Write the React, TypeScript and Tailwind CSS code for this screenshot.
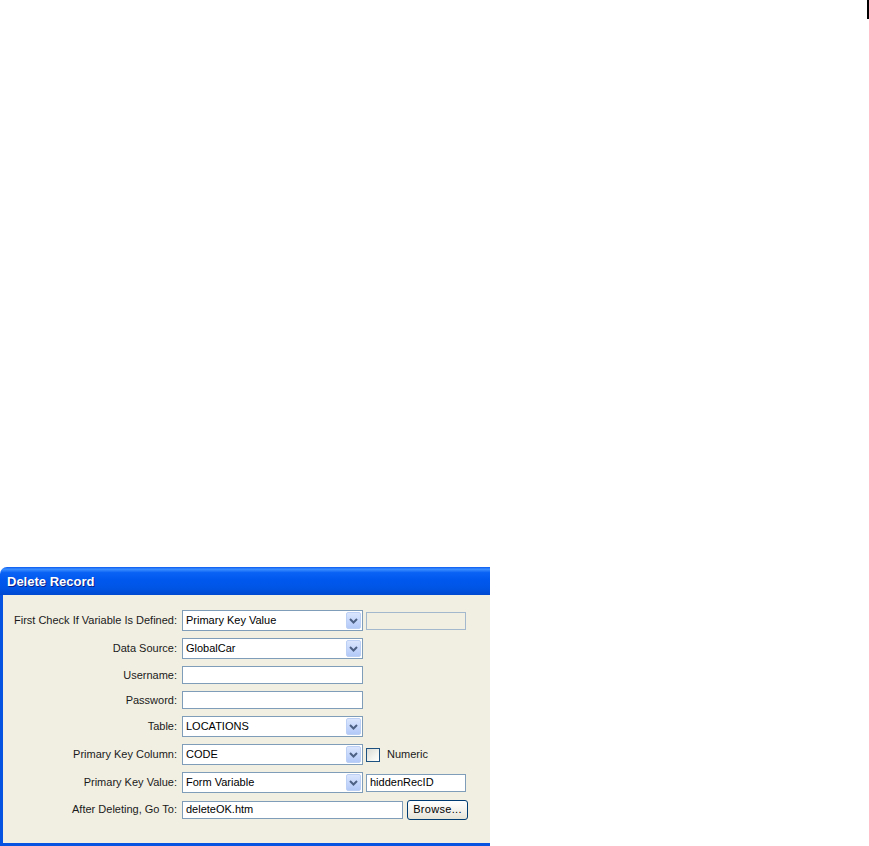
import type { ReactNode } from "react";

const font = "font-['Liberation_Sans',Arial,sans-serif]";

function Chevron() {
  return (
    <svg width="9" height="6" viewBox="0 0 9 6" className="block">
      <path d="M1 1 L4.5 4.5 L8 1" fill="none" stroke="#4d6185" strokeWidth="2" />
    </svg>
  );
}

function Select({ value, width = "w-[181px]" }: { value: string; width?: string }) {
  return (
    <div className={`${width} h-[21px] flex items-center bg-white border border-[#7f9db9] pl-[3px] pr-px`}>
      <span className="flex-1 truncate text-[11px] text-black">{value}</span>
      <span className="w-[15px] h-[17px] flex items-center justify-center rounded-[2px] border border-[#bcd0f5] bg-[linear-gradient(180deg,#dbe6fd_0%,#c4d6fb_55%,#b3c9f7_100%)]">
        <Chevron />
      </span>
    </div>
  );
}

function TextField({ value = "", width = "w-[181px]", disabled = false }: { value?: string; width?: string; disabled?: boolean }) {
  return (
    <div
      className={`${width} h-[18px] flex items-center border pl-[3px] text-[11px] text-black ${
        disabled ? "bg-[#f1efe2] border-[#a3b7cd]" : "bg-white border-[#7f9db9]"
      }`}
    >
      {value}
    </div>
  );
}

function Row({ label, h, children }: { label: string; h: string; children: ReactNode }) {
  return (
    <div className={`flex items-center ${h}`}>
      <div className="w-[179px] shrink-0 text-right pr-[5px] text-[11px] text-[#1a1a1a]">{label}</div>
      <div className="flex items-center gap-[3px]">{children}</div>
    </div>
  );
}

export default function App() {
  return (
    <div className={`h-[846px] w-[869px] bg-white flex flex-col ${font}`}>
      <div className="flex justify-end">
        <div className="w-[2px] h-[19px] bg-black" />
      </div>

      <div className="mt-auto w-[490px] h-[279px] flex flex-col">
        {/* title bar */}
        <div className="h-[28px] shrink-0 rounded-tl-[7px] flex items-center pl-[7px] bg-[linear-gradient(180deg,#0a5cf0_0%,#3d8fff_8%,#0a62f5_20%,#0058ee_45%,#0055e5_75%,#0049d0_100%)]">
          <span className="text-[13px] font-bold text-white [text-shadow:1px_1px_0_#0a1f8a] pt-px">
            Delete Record
          </span>
        </div>

        {/* body */}
        <div className="flex-1 flex border-l-[3px] border-b-[3px] border-[#0553e0] bg-[#f1efe2]">
          <div className="flex flex-col gap-[7px] pt-[15px]">
            <Row label="First Check If Variable Is Defined:" h="h-[21px]">
              <Select value="Primary Key Value" />
              <TextField disabled width="w-[100px]" />
            </Row>
            <Row label="Data Source:" h="h-[21px]">
              <Select value="GlobalCar" />
            </Row>
            <Row label="Username:" h="h-[18px]">
              <TextField />
            </Row>
            <Row label="Password:" h="h-[18px]">
              <TextField />
            </Row>
            <Row label="Table:" h="h-[21px]">
              <Select value="LOCATIONS" />
            </Row>
            <Row label="Primary Key Column:" h="h-[21px]">
              <Select value="CODE" />
              <span className="w-[14px] h-[14px] border border-[#1c5180] bg-[linear-gradient(135deg,#dcdcd5_0%,#f3f3ef_60%,#ffffff_100%)]" />
              <span className="ml-[4px] text-[11px] text-[#1a1a1a]">Numeric</span>
            </Row>
            <Row label="Primary Key Value:" h="h-[21px]">
              <Select value="Form Variable" />
              <TextField value="hiddenRecID" width="w-[100px]" />
            </Row>
            <Row label="After Deleting, Go To:" h="h-[19px]">
              <TextField value="deleteOK.htm" width="w-[221px]" />
              <button className="ml-px w-[61px] h-[20px] rounded-[3px] border border-[#003c74] text-[11px] text-black tracking-[0.3px] bg-[linear-gradient(180deg,#ffffff_0%,#f4f3ee_50%,#e6e3d6_100%)]">
                Browse...
              </button>
            </Row>
          </div>
        </div>
      </div>
    </div>
  );
}
